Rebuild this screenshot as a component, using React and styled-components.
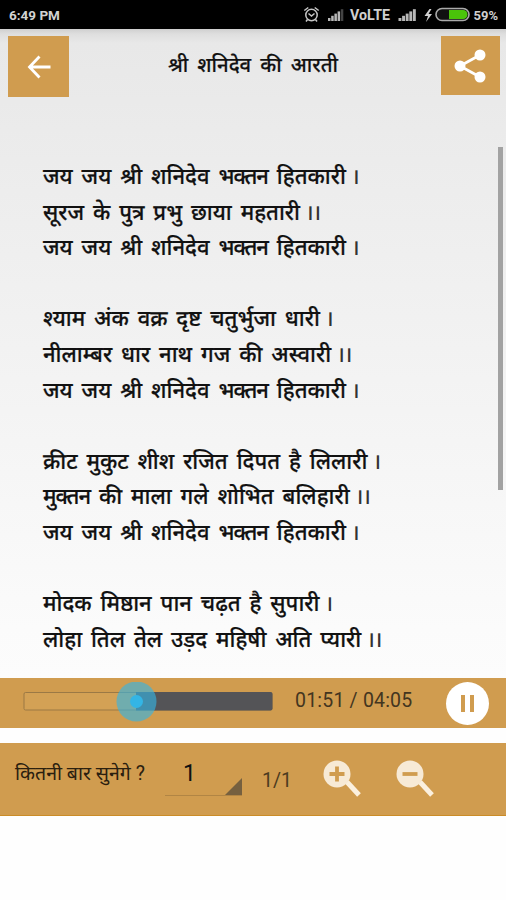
import React from "react";
import styled, { createGlobalStyle } from "styled-components";

const GlobalStyle = createGlobalStyle`
  * { box-sizing: border-box; }
  body { margin: 0; background: #fdfdfd; color: #111; font-family: Roboto, "Noto Sans Devanagari", "Noto Sans", sans-serif; }
`;

const Screen = styled.div`
  width: 506px;
  height: 900px;
  overflow: hidden;
  display: flex;
  flex-direction: column;
  background: #fefefe;
`;

const StatusBar = styled.header`
  height: 29px;
  flex: none;
  background: #000;
  color: #d2d2d2;
  display: flex;
  align-items: center;
  padding: 0 8px 0 9px;
  font-size: 13.5px;
  font-weight: 700;
`;

const StatusIcons = styled.svg`
  margin-left: auto;
  flex: none;
`;

const Reader = styled.main`
  height: 649px;
  flex: none;
  display: flex;
  flex-direction: column;
  overflow: hidden;
  background: linear-gradient(#cfcfcf 0, #dedede 5px, #e8e8e8 14px, #ebebeb 100px, #fbfbfb 600px, #fcfcfc);
`;

const TopBar = styled.div`
  height: 118px;
  flex: none;
  display: flex;
  align-items: flex-start;
  justify-content: space-between;
  padding: 7px 6px 0 8px;
`;

const SquareButton = styled.button`
  width: ${(p) => p.$size}px;
  height: ${(p) => p.$size}px;
  border: 0;
  padding: 0;
  background: #d09c4f;
  display: flex;
  align-items: center;
  justify-content: center;
`;

const Title = styled.h1`
  margin: 13px 4px 0 0;
  font-size: 20.3px;
  line-height: 32px;
  font-weight: 500;
  white-space: nowrap;
  word-spacing: 4px;
  -webkit-text-stroke: 0.2px #111;
`;

const LyricsPane = styled.section`
  flex: 1;
  min-height: 0;
  display: flex;
  justify-content: space-between;
  padding: 0 3px 0 43px;
`;

const Lyrics = styled.div`
  padding-top: 12px;
`;

const Verse = styled.p`
  margin: 0 0 35.6px;
`;

const Line = styled.span`
  display: block;
  height: 35.6px;
  line-height: 35.6px;
  font-size: 22px;
  font-weight: 500;
  white-space: nowrap;
  word-spacing: 3.4px;
  -webkit-text-stroke: 0.2px #111;
`;

const TightWord = styled.span`
  letter-spacing: -1px;
`;

const Danda = styled.span`
  margin-left: -3.5px;
  letter-spacing: -1px;
  color: #333;
  -webkit-text-stroke: 0;
`;

const ScrollThumb = styled.div`
  width: 5px;
  height: 343px;
  background: #a2a2a2;
`;

const Player = styled.section`
  height: 50px;
  flex: none;
  display: flex;
  align-items: center;
  padding: 1px 17px 0 16px;
  background: #d09c4f;
`;

const SeekBar = styled.svg`
  flex: none;
`;

const Time = styled.span`
  margin: -6px auto 0 15px;
  font-size: 19.5px;
  letter-spacing: 0.2px;
  color: #43351f;
  white-space: nowrap;
`;

const PauseButton = styled.button`
  width: 43px;
  height: 43px;
  border: 0;
  padding: 0;
  border-radius: 50%;
  background: #fff;
  display: flex;
  align-items: center;
  justify-content: center;
  gap: 5px;
`;

const PauseStroke = styled.i`
  width: 4px;
  height: 17px;
  background: #d09c4f;
`;

const Controls = styled.footer`
  height: 73px;
  flex: none;
  margin-top: 15px;
  display: flex;
  align-items: flex-start;
  padding: 0 0 0 15px;
  background: #d09c4f;
  border-bottom: 1px solid #cb8c27;
`;

const Question = styled.label`
  width: 150px;
  padding-top: 15px;
  font-size: 19.5px;
  line-height: 32px;
  color: #2b200f;
  white-space: nowrap;
`;

const Spinner = styled.div`
  width: 77px;
  height: 35px;
  margin-top: 18px;
  display: flex;
  align-items: flex-end;
  justify-content: space-between;
  padding-left: 18px;
  border-bottom: 1px solid #b18544;
`;

const SpinnerValue = styled.span`
  font-size: 23px;
  line-height: 26px;
  align-self: flex-start;
`;

const Count = styled.span`
  width: 60px;
  padding: 24px 0 0 20px;
  font-size: 19.5px;
  line-height: 27px;
  color: #4b3a20;
`;

const Zoom = styled.svg`
  margin: 15px 32px 0 0;
  flex: none;
`;

const ZoomTools = styled.div`
  display: flex;
  padding-left: 21px;
`;

const verses = [
  [["जय जय श्री शनिदेव भक्तन हितकारी", 1], ["सूरज के पुत्र प्रभु छाया महतारी", 2], ["जय जय श्री शनिदेव भक्तन हितकारी", 1]],
  [["श्याम अंक वक्र दृष्ट चतुर्भुजा धारी", 1], ["नीलाम्बर धार नाथ गज की अस्वारी", 2], ["जय जय श्री शनिदेव भक्तन हितकारी", 1]],
  [["क्रीट मुकुट शीश रजित दिपत है लिलारी", 1], ["मुक्तन की माला गले शोभित बलिहारी", 2], ["जय जय श्री शनिदेव भक्तन हितकारी", 1]],
  [["मोदक मिष्ठान पान चढ़त है सुपारी", 1], ["लोहा तिल तेल उड़द महिषी अति प्यारी", 2]],
];

function LyricText({ text }) {
  return text.split(" ").map((word, i) => (
    <React.Fragment key={i}>
      {word.includes("क्त") ? <TightWord>{word}</TightWord> : word}{" "}
    </React.Fragment>
  ));
}

function SignalBars({ x, w }) {
  const step = w / 5;
  return [0, 1, 2, 3, 4].map((i) => {
    const h = 3 + i * 2.2;
    return <rect key={i} x={x + i * step} y={21 - h} width={step - 0.7} height={h} fill={i === 4 && w < 17 ? "#444" : "#b8b8b8"} />;
  });
}

function StatusGlyphs() {
  return (
    <StatusIcons width="198" height="29" viewBox="300 0 198 29">
      <g fill="none" stroke="#c6c6c6" strokeWidth="1.5">
        <circle cx="311.5" cy="15" r="5.7" />
        <path d="M304.3 10.5l4-3M318.7 10.5l-4-3M308.5 13.5l3 2.5 3-2.5M307.5 19.5l-1.5 2M315.5 19.5l1.5 2" />
      </g>
      <SignalBars x={328} w={16} />
      <text x="350" y="19.7" fill="#d0d0d0" fontSize="13.8" fontWeight="700" textLength="40" lengthAdjust="spacingAndGlyphs">VoLTE</text>
      <SignalBars x={398.5} w={18} />
      <path d="M429.5 9l-5 7h3.5l-2 6 6-8h-3.5l3-5z" fill="#d0d0d0" />
      <rect x="436" y="8.5" width="33" height="12" rx="6" fill="#111" stroke="#aaa" strokeWidth="1.6" />
      <path d="M449 10h14a4.5 4.5 0 0 1 0 9h-14z" fill="#4ac40a" />
      <text x="473.5" y="19.7" fill="#d0d0d0" fontSize="13.5" fontWeight="700" textLength="24.5" lengthAdjust="spacingAndGlyphs">59%</text>
    </StatusIcons>
  );
}

function Magnifier({ plus }) {
  return (
    <Zoom width="41" height="41" viewBox="0 0 41 41">
      <path d="M24 24L36 37" stroke="#fbf0de" strokeWidth="5" />
      <circle cx="14" cy="16" r="13.5" fill="#f7ead6" />
      <path d={plus ? "M6.5 16h15M14 8.5v15" : "M6.5 16h15"} stroke="#d09c4f" strokeWidth="3.8" />
    </Zoom>
  );
}

export default function App() {
  return (
    <Screen lang="hi">
      <GlobalStyle />
      <StatusBar>
        6:49 PM
        <StatusGlyphs />
      </StatusBar>
      <Reader>
        <TopBar>
          <SquareButton $size={61} aria-label="Back">
            <svg width="24" height="24" viewBox="0 0 24 24" fill="none" stroke="#fff" strokeWidth="2.8">
              <path d="M23.5 12H3M12.5 1.5L2.5 12l10 10.5" />
            </svg>
          </SquareButton>
          <Title>श्री शनिदेव की आरती</Title>
          <SquareButton $size={59} aria-label="Share">
            <svg width="34" height="34" viewBox="0 0 34 34" fill="#fff">
              <path d="M27 6L7 17l20 11" fill="none" stroke="#fff" strokeWidth="2.8" />
              <circle cx="27" cy="6" r="5.5" />
              <circle cx="7" cy="17" r="5.5" />
              <circle cx="27" cy="28" r="5.5" />
            </svg>
          </SquareButton>
        </TopBar>
        <LyricsPane>
          <Lyrics>
            {verses.map((lines, v) => (
              <Verse key={v}>
                {lines.map(([text, bars], i) => (
                  <Line key={i}>
                    <LyricText text={text} />
                    <Danda>{"।".repeat(bars)}</Danda>
                  </Line>
                ))}
              </Verse>
            ))}
          </Lyrics>
          <ScrollThumb />
        </LyricsPane>
      </Reader>
      <Player>
        <SeekBar width="264" height="44" viewBox="16 0 264 44">
          <rect x="24" y="10.5" width="248" height="17.5" rx="1.5" fill="#d3a155" stroke="#9b7945" />
          <path d="M136 10h134.500a2 2 0 0 1 2 2v14.500a2 2 0 0 1-2 2H136z" fill="#545457" />
          <circle cx="136.5" cy="19.5" r="20" fill="#33b5e5" fillOpacity=".62" />
          <circle cx="136.5" cy="19.5" r="6.5" fill="#33b5e5" />
        </SeekBar>
        <Time>01:51 / 04:05</Time>
        <PauseButton aria-label="Pause"><PauseStroke /><PauseStroke /></PauseButton>
      </Player>
      <Controls>
        <Question>कितनी बार सुनेगे ?</Question>
        <Spinner>
          <SpinnerValue>1</SpinnerValue>
          <svg width="17" height="17" viewBox="0 0 17 17"><path d="M17 0v17H0z" fill="#76603f" /></svg>
        </Spinner>
        <Count>1/1</Count>
        <ZoomTools>
          <Magnifier plus />
          <Magnifier />
        </ZoomTools>
      </Controls>
    </Screen>
  );
}
